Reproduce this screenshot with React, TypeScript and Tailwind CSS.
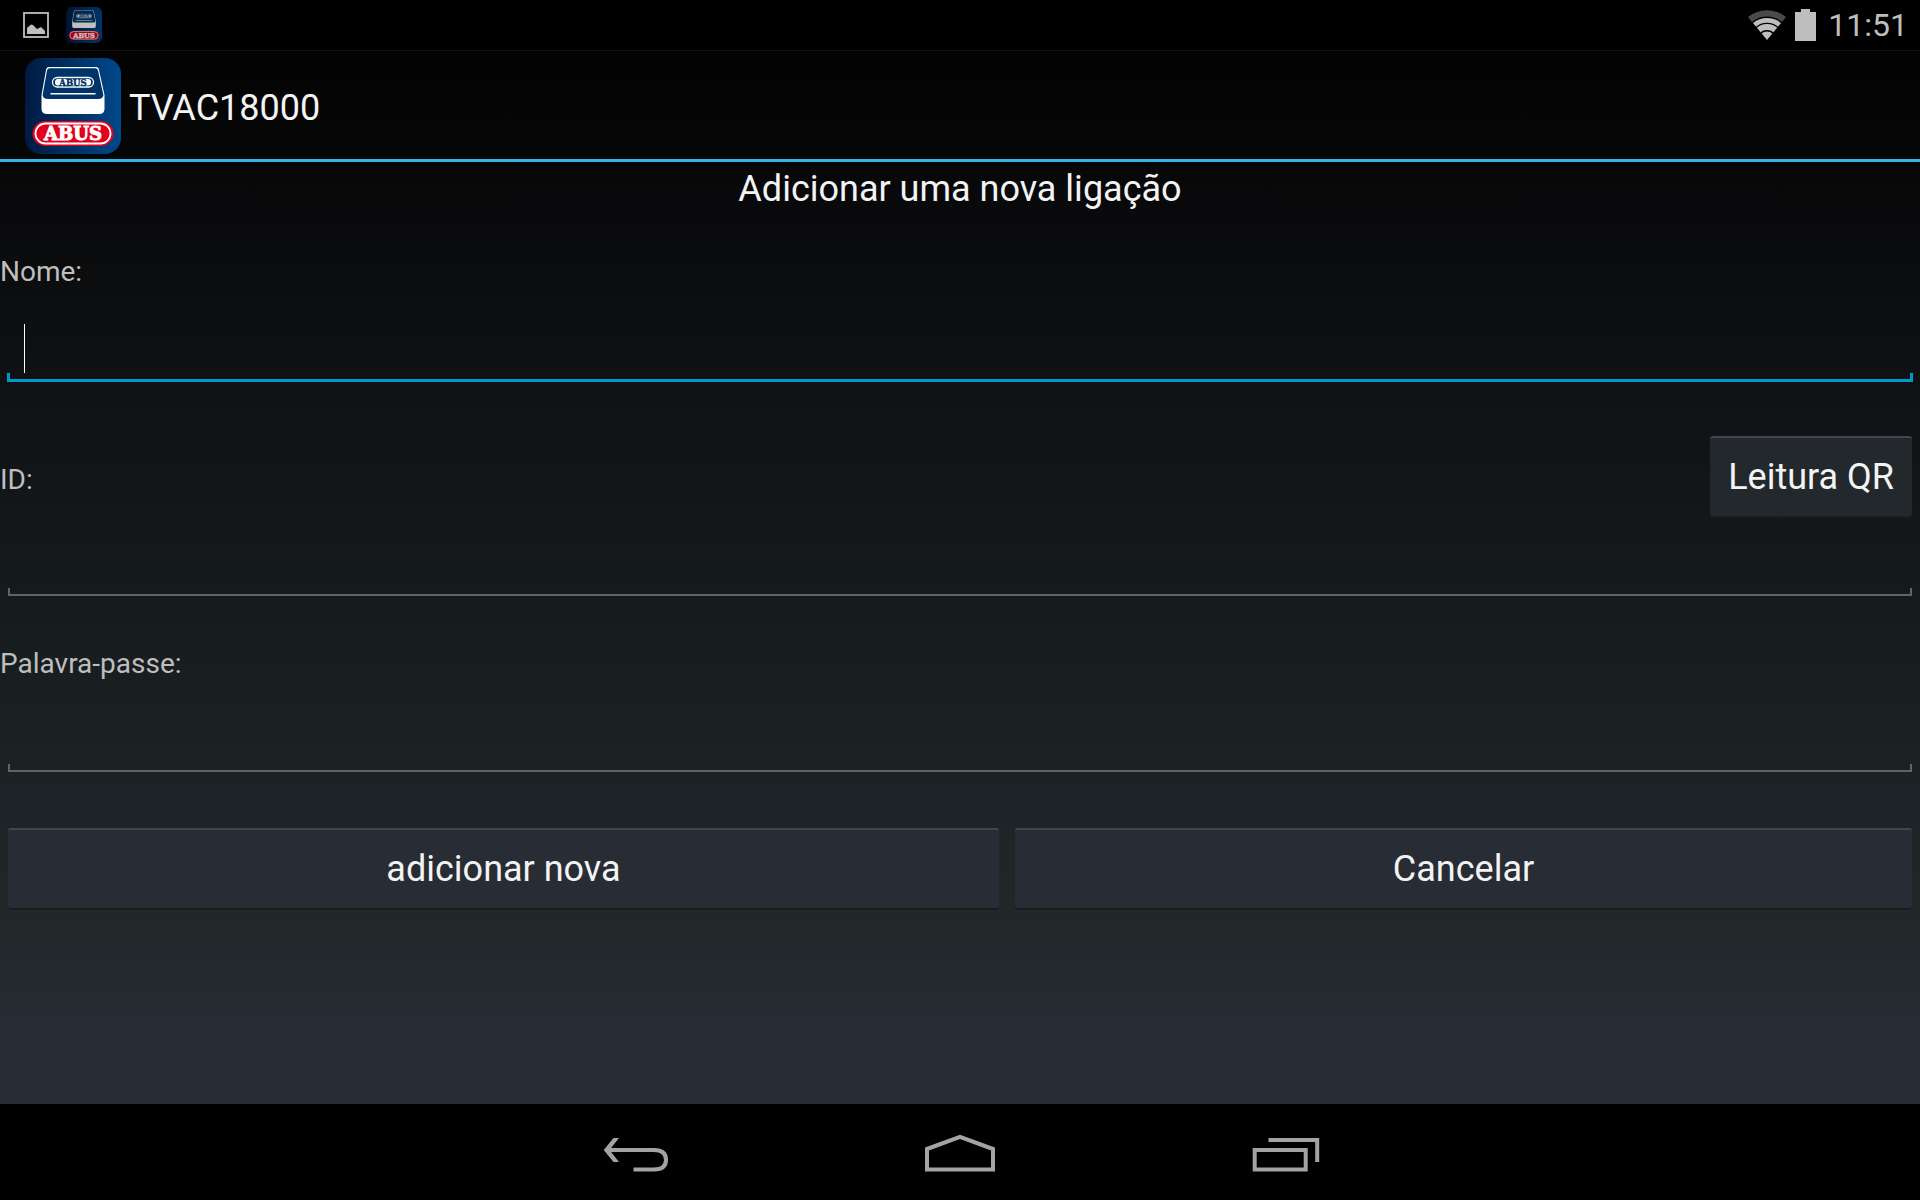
import React from 'react';

const FONT = "font-['Roboto','Liberation_Sans',sans-serif]";

const AppLogo = ({ className, id }: { className: string; id: string }) => (
  <svg viewBox="0 0 96 96" className={className} aria-hidden="true">
    <defs>
      <linearGradient id={id} x1="0" y1="0" x2="1" y2="0">
        <stop offset="0" stopColor="#001a42" />
        <stop offset="1" stopColor="#00488a" />
      </linearGradient>
    </defs>
    <rect width="96" height="96" rx="16" fill={`url(#${id})`} />
    {/* recorder */}
    <path d="M24 9 H71 Q73.5 9 74 12 L79.5 37 V51 Q79.5 56 74 56 H22 Q16.5 56 16.5 51 V37 L21 12 Q21.5 9 24 9Z" fill="#fff" />
    <path d="M25 10.2 H70 Q72.5 10.2 73 12.5 L78.4 37 Q78 41 73 41 H23 Q18 41 17.6 37 L22 12.5 Q22.5 10.2 25 10.2Z" fill="#003468" />
    <rect x="25.5" y="35" width="45" height="1.5" fill="#fff" />
    <rect x="27.5" y="19.5" width="41" height="9.5" rx="4.7" fill="none" stroke="#fff" strokeWidth="1.3" />
    <rect x="30" y="21" width="36" height="6.5" rx="3" fill="#fff" />
    <text x="48" y="27.5" textAnchor="middle" fontFamily="'DejaVu Serif', serif" fontWeight="700" fontSize="8.5" stroke="#003468" strokeWidth="0.4" fill="#003468">ABUS</text>
    {/* badge */}
    <rect x="7.5" y="63" width="81" height="25" rx="12.5" fill="#e2001a" />
    <rect x="10.5" y="65.5" width="75" height="20" rx="10" fill="none" stroke="#fff" strokeWidth="1.8" />
    <text x="48" y="82" textAnchor="middle" fontFamily="'DejaVu Serif', serif" fontWeight="700" fontSize="18" stroke="#fff" strokeWidth="1" fill="#fff">ABUS</text>
  </svg>
);

const PictureIcon = () => (
  <svg viewBox="0 0 26 26" className="w-[26px] h-[26px]" aria-hidden="true">
    <rect x="1" y="1" width="24" height="24" fill="none" stroke="#bebebe" strokeWidth="1.8" />
    <path d="M4 22 V16 L8 12.5 L10 13 L14 17 L18 15 L22 19 V22Z" fill="#bebebe" />
  </svg>
);

const WifiIcon = () => (
  <svg viewBox="0 0 38 30" className="w-[38px] h-[30px]" aria-hidden="true">
    <path d="M0 7 A29.8 29.8 0 0 1 38 7 L34 12 A23.5 23.5 0 0 0 4 12Z" fill="#4a4a4a" />
    <path d="M5 13 A22.3 22.3 0 0 1 33 13 L19 30Z" fill="#bebebe" />
    <path d="M7 18.6 A16.5 16.5 0 0 1 31 18.6 M12 24 A9.2 9.2 0 0 1 26 24" fill="none" stroke="#000" strokeWidth="1.3" />
  </svg>
);

const BatteryIcon = () => (
  <svg viewBox="0 0 21 32" className="w-[21px] h-8" aria-hidden="true">
    <path d="M6 0 H15 V3 H21 V32 H0 V3 H6Z" fill="#bebebe" />
  </svg>
);

const Field = ({ id, type = 'text', focused = false }: { id: string; type?: string; focused?: boolean }) => (
  <div className="relative mx-2">
    <input
      id={id}
      type={type}
      className="block w-full h-16 px-4 bg-transparent text-4xl text-[#f3f3f3] caret-white outline-none"
    />
    <div
      className={
        focused
          ? 'absolute inset-x-0 bottom-0 -mx-px h-[9px] border-x-3 border-b-3 border-[#0099cc] pointer-events-none'
          : 'absolute inset-x-0 bottom-0 h-2 border-x-2 border-b-2 border-[#606466] pointer-events-none'
      }
    />
    {focused && <div className="absolute left-4 bottom-[9px] w-px h-[49px] bg-white" />}
  </div>
);

const FormButton = ({ className, children }: { className: string; children: React.ReactNode }) => (
  <button
    type="button"
    className={`h-20 rounded-[3px] border-t-2 border-[#43474c] text-4xl text-[#f3f3f3] shadow-[0_2px_0_#1a1d20] ${className}`}
  >
    {children}
  </button>
);

const StatusBar = () => (
  <div className="h-[51px] shrink-0 bg-black border-b border-[#141414] flex items-center justify-between pl-[23px] pr-3">
    <div className="flex items-center gap-[17px]">
      <PictureIcon />
      <AppLogo id="statusLogo" className="w-9 h-9 opacity-75" />
    </div>
    <div className="flex items-center">
      <WifiIcon />
      <div className="ml-[9px]">
        <BatteryIcon />
      </div>
      <span className="ml-3 text-[32px] leading-8 text-[#bebebe]">11:51</span>
    </div>
  </div>
);

const NavBar = () => (
  <nav className="h-24 shrink-0 bg-black flex items-center justify-center">
    <button type="button" aria-label="Back" className="w-[324px] h-full flex items-center justify-center">
      <svg viewBox="0 0 66 40" className="w-[66px] h-10">
        <path d="M10.5 6 H16 L6.5 18 L16 30 H10.5 L0.7 18Z" fill="#a3a3a3" />
        <path d="M4 18 H51 C59 18 63 21.5 63 27.7 C63 34 59 37.5 51 37.5 H30.5" fill="none" stroke="#a3a3a3" strokeWidth="4" />
      </svg>
    </button>
    <button type="button" aria-label="Home" className="w-[324px] h-full flex items-center justify-center">
      <svg viewBox="0 0 72 40" className="w-[72px] h-10" fill="none" stroke="#a3a3a3" strokeWidth="4">
        <path d="M3 17 L36 4.8 L69 17 V37.5 H3Z" />
      </svg>
    </button>
    <button type="button" aria-label="Recent apps" className="w-[324px] h-full flex items-center justify-center">
      <svg viewBox="0 0 72 40" className="w-[72px] h-10" fill="none" stroke="#a3a3a3" strokeWidth="4">
        <path d="M6.7 18 H57.7 V37.5 H6.7Z M20.5 8 H69.2 V30" />
      </svg>
    </button>
  </nav>
);

export default function App() {
  return (
    <div className={`min-h-screen flex flex-col bg-black text-[#f3f3f3] ${FONT}`}>
      <div className="flex-1 flex flex-col bg-[linear-gradient(to_bottom,#000_0%,#0f1012_32%,#151a1c_53%,#1f2428_76%,#22272a_84%,#282c35_94%,#282d35_100%)]">
        <StatusBar />

        <header className="h-[111px] shrink-0 border-b-3 border-[#33b5e5] flex items-center gap-2 pt-[2px] pl-[25px]">
          <AppLogo id="headerLogo" className="w-24 h-24" />
          <span className="pt-1 text-4xl">TVAC18000</span>
        </header>

        <main>
          <h1 className="pt-1 text-4xl leading-[46px] text-center">Adicionar uma nova ligação</h1>

          <form>
            <label htmlFor="name" className="block mt-[42px] text-[28px] leading-9 text-[#bebebe]">Nome:</label>
            <div className="mt-7">
              <Field id="name" focused />
            </div>

            <div className="mt-[54px] flex items-center justify-between pr-2">
              <label htmlFor="uid" className="pt-2 text-[28px] leading-9 text-[#bebebe]">ID:</label>
              <FormButton className="px-[18px] bg-[#23282c]">Leitura QR</FormButton>
            </div>
            <div className="mt-4">
              <Field id="uid" />
            </div>

            <label htmlFor="password" className="block mt-[50px] text-[28px] leading-9 text-[#bebebe]">Palavra-passe:</label>
            <div className="mt-[26px]">
              <Field id="password" type="password" />
            </div>

            <div className="mt-14 px-2 flex gap-4">
              <FormButton className="grow-[991] basis-0 bg-[#282c34]">adicionar nova</FormButton>
              <FormButton className="grow-[897] basis-0 bg-[#282c34]">Cancelar</FormButton>
            </div>
          </form>
        </main>
      </div>

      <NavBar />
    </div>
  );
}
